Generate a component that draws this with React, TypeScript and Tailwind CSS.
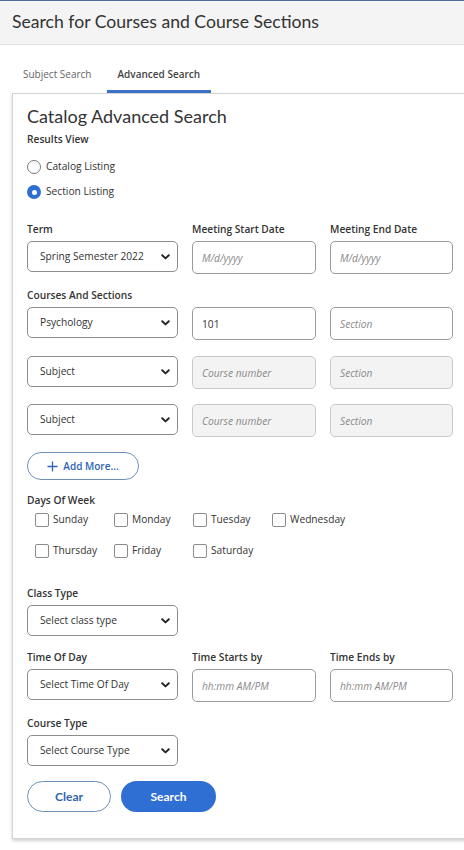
import React from 'react';

const body = { fontFamily: '"Open Sans", "Noto Sans", sans-serif' };
const head = { fontFamily: 'Lato, "Open Sans", sans-serif' };

const Chevron = () => (
  <svg width="9" height="6" viewBox="0 0 9 6" className="shrink-0">
    <path d="M1.2 1.2 L4.5 4.4 L7.8 1.2" fill="none" stroke="#222" strokeWidth="1.9" strokeLinecap="round" strokeLinejoin="round" />
  </svg>
);

const Select = ({ value }: { value: string }) => (
  <div className="flex h-[31px] w-[151px] shrink-0 items-center justify-between rounded-[5px] border border-[#8c8c8c] bg-white pl-[12px] pr-[7px] text-[10.2px] text-[#333]">
    <span>{value}</span>
    <Chevron />
  </div>
);

const Field = ({ placeholder, value, disabled, w }: { placeholder: string; value?: string; disabled?: boolean; w: string }) => (
  <input
    readOnly
    defaultValue={value}
    placeholder={placeholder}
    className={`h-[33px] shrink-0 rounded-[5px] border px-[9px] text-[10.2px] text-[#333] outline-none placeholder:italic placeholder:text-[#8a8a8a] ${w} ${
      disabled ? 'border-[#c9c9c9] bg-[#f3f3f3]' : 'border-[#9a9a9a] bg-white'
    }`}
    style={body}
  />
);

const Label = ({ children, className = '' }: { children: React.ReactNode; className?: string }) => (
  <div className={`text-[10.2px] font-semibold leading-[16px] text-[#333] ${className}`}>{children}</div>
);

const Radio = ({ checked, label, className = '' }: { checked?: boolean; label: string; className?: string }) => (
  <div className={`flex h-[20px] items-center gap-[5px] ${className}`}>
    {checked ? (
      <span className="flex h-[14px] w-[14px] items-center justify-center rounded-full bg-[#2f6fd1]">
        <span className="h-[5px] w-[5px] rounded-full bg-white" />
      </span>
    ) : (
      <span className="h-[14px] w-[14px] rounded-full border border-[#7a7a7a] bg-white" />
    )}
    <span className="text-[10.2px] text-[#333]">{label}</span>
  </div>
);

const Day = ({ label }: { label: string }) => (
  <div className="flex h-[20px] w-[79px] items-center gap-[4px]">
    <span className="h-[14px] w-[14px] rounded-[2px] border border-[#8a8a8a] bg-white" />
    <span className="text-[10.2px] text-[#333]">{label}</span>
  </div>
);

export default function App() {
  const cols1 = 'w-[151px]';
  const cols2 = 'w-[124px]';
  const cols3 = 'w-[123px]';
  return (
    <div className="h-[850px] w-[464px] overflow-hidden bg-white" style={body}>
      <div className="h-[45px] border-t border-b border-t-[#4a6e9b] border-b-[#e6e6e6] bg-[#f4f4f4] pl-[12px]">
        <h1 className="pt-[9px] text-[17.6px] leading-[24px] text-[#333]" style={head}>
          Search for Courses and Course Sections
        </h1>
      </div>

      <div className="ml-[12px] mt-[15px] flex gap-[4px] text-[10px] leading-[16px]">
        <div className="border-b-[3px] border-transparent px-[11px] pt-[6px] pb-[8px] text-[#666]">Subject Search</div>
        <div className="border-b-[3px] border-[#3a70c9] px-[11px] pt-[6px] pb-[8px] font-semibold text-[#444]">Advanced Search</div>
      </div>

      <div className="ml-[12px] w-[470px] border border-[#d4d4d4] pl-[14px] pt-[10px] pb-[26px] shadow-[0_2px_3px_rgba(0,0,0,0.18)]">
        <h2 className="text-[18px] leading-[24px] text-[#333]" style={head}>Catalog Advanced Search</h2>
        <Label className="mt-[3px]">Results View</Label>
        <Radio label="Catalog Listing" className="mt-[10px]" />
        <Radio checked label="Section Listing" className="mt-[5px]" />

        <div className="mt-[19px] flex gap-[14px]">
          <Label className={cols1}>Term</Label>
          <Label className={cols2}>Meeting Start Date</Label>
          <Label className={cols3}>Meeting End Date</Label>
        </div>
        <div className="mt-[4px] flex items-start gap-[14px]">
          <Select value="Spring Semester 2022" />
          <Field placeholder="M/d/yyyy" w={cols2} />
          <Field placeholder="M/d/yyyy" w={cols3} />
        </div>

        <Label className="mt-[13px]">Courses And Sections</Label>
        <div className="mt-[4px] flex items-start gap-[14px]">
          <Select value="Psychology" />
          <Field placeholder="Course number" value="101" w={cols2} />
          <Field placeholder="Section" w={cols3} />
        </div>
        <div className="mt-[16px] flex items-start gap-[14px]">
          <Select value="Subject" />
          <Field placeholder="Course number" disabled w={cols2} />
          <Field placeholder="Section" disabled w={cols3} />
        </div>
        <div className="mt-[15px] flex items-start gap-[14px]">
          <Select value="Subject" />
          <Field placeholder="Course number" disabled w={cols2} />
          <Field placeholder="Section" disabled w={cols3} />
        </div>

        <button className="mt-[15px] flex h-[28px] w-[112px] items-center justify-center gap-[5px] rounded-full border border-[#6f90b6] text-[10px] font-semibold text-[#2d64b3]">
          <svg width="11" height="11" viewBox="0 0 11 11">
            <path d="M5.5 0.5 V10.5 M0.5 5.5 H10.5" stroke="#2d64b3" strokeWidth="1.3" />
          </svg>
          Add More...
        </button>

        <Label className="mt-[12px]">Days Of Week</Label>
        <div className="mt-[2px] flex pl-[8px]">
          <Day label="Sunday" />
          <Day label="Monday" />
          <Day label="Tuesday" />
          <Day label="Wednesday" />
        </div>
        <div className="mt-[11px] flex pl-[8px]">
          <Day label="Thursday" />
          <Day label="Friday" />
          <Day label="Saturday" />
        </div>

        <Label className="mt-[24px]">Class Type</Label>
        <div className="mt-[4px]">
          <Select value="Select class type" />
        </div>

        <div className="mt-[13px] flex gap-[14px]">
          <Label className={cols1}>Time Of Day</Label>
          <Label className={cols2}>Time Starts by</Label>
          <Label className={cols3}>Time Ends by</Label>
        </div>
        <div className="mt-[4px] flex items-start gap-[14px]">
          <Select value="Select Time Of Day" />
          <Field placeholder="hh:mm AM/PM" w={cols2} />
          <Field placeholder="hh:mm AM/PM" w={cols3} />
        </div>

        <Label className="mt-[13px]">Course Type</Label>
        <div className="mt-[4px]">
          <Select value="Select Course Type" />
        </div>

        <div className="mt-[15px] flex gap-[10px]" style={head}>
          <button className="h-[31px] w-[84px] rounded-full border border-[#6f90b6] bg-white text-[12px] font-bold text-[#2f64b0]">Clear</button>
          <button className="h-[31px] w-[95px] rounded-full bg-[#2f6fd4] text-[12px] font-bold text-white">Search</button>
        </div>
      </div>
    </div>
  );
}
